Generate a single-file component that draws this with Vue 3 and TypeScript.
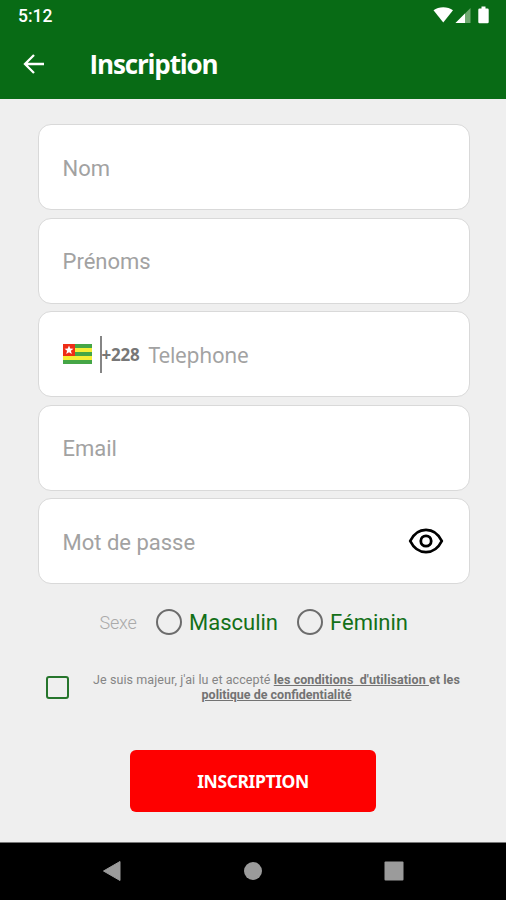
<script setup lang="ts">
import { ref } from 'vue'

interface Field {
  id: string
  label: string
  kind: 'text' | 'phone' | 'password'
}

const fields: Field[] = [
  { id: 'nom', label: 'Nom', kind: 'text' },
  { id: 'prenoms', label: 'Prénoms', kind: 'text' },
  { id: 'telephone', label: 'Telephone', kind: 'phone' },
  { id: 'email', label: 'Email', kind: 'text' },
  { id: 'passe', label: 'Mot de passe', kind: 'password' },
]

const genders = ['Masculin', 'Féminin']
const gender = ref('')
const accepted = ref(false)
</script>

<template>
  <div class="screen">
    <header class="top">
      <div class="status">
        <span class="clock">5:12</span>
        <svg class="status-icons" width="58" height="20" viewBox="0 0 58 20">
          <path d="M.5 5.200C5.700 1.100 14.800 1.100 20 5.200L10.250 17.500Z" fill="#fff" />
          <path d="M37.500 3V18H22.500Z" fill="#6fa971" />
          <path d="M32 8.500V18H22.500Z" fill="#fff" />
          <path d="M48.500 1.500h4V3.500h2q1.200 0 1.200 1.200V17q0 1.200-1.200 1.200h-8q-1.200 0-1.200-1.200V4.700q0-1.200 1.200-1.200h2Z" fill="#fff" />
        </svg>
      </div>
      <div class="appbar">
        <svg class="back" width="24" height="22" viewBox="0 0 24 22">
          <path d="M22 11H3M12 2L3 11L12 20" fill="none" stroke="#fff" stroke-width="2.300" />
        </svg>
        <h1>Inscription</h1>
      </div>
    </header>

    <main>
      <div class="fields">
        <div v-for="f in fields" :key="f.id" class="field" :class="f.kind">
          <template v-if="f.kind === 'phone'">
            <svg class="flag" width="29" height="20" viewBox="0 0 29 20">
              <rect width="29" height="20" fill="#45a646" />
              <rect y="4" width="29" height="4" fill="#f5ee35" />
              <rect y="12" width="29" height="4" fill="#f5ee35" />
              <rect width="12" height="12" fill="#ee2d16" />
              <path d="M6 1.500l1.200 3.100 3.300.1-2.600 2.100.9 3.200L6 8.200 3.200 10l.9-3.200L1.500 4.700l3.300-.1Z" fill="#fff" />
            </svg>
            <span class="divider"></span>
            <span class="code">+228</span>
          </template>
          <span class="label" :class="f.id">{{ f.label }}</span>
          <svg v-if="f.kind === 'password'" class="eye" width="36" height="28" viewBox="0 0 36 28">
            <path d="M2.200 14C9.500-.8 26.500-.8 33.800 14C26.500 28.800 9.500 28.800 2.200 14Z" fill="none" stroke="#000" stroke-width="2.800" stroke-linejoin="round" />
            <circle cx="18" cy="14" r="5.200" fill="none" stroke="#000" stroke-width="2.800" />
          </svg>
        </div>
      </div>

      <div class="gender">
        <span class="caption">Sexe</span>
        <div v-for="g in genders" :key="g" class="option" @click="gender = g">
          <span class="radio" :class="{ on: gender === g }"></span>
          <span class="name">{{ g }}</span>
        </div>
      </div>

      <div class="terms">
        <span class="check" :class="{ on: accepted }" @click="accepted = !accepted"></span>
        <p>
          <span class="line first">Je suis majeur, j'ai lu et accepté <b><u>les conditions&nbsp; d'utilisation&nbsp;</u>et les</b></span>
          <span class="line"><b><u>politique de confidentialité</u></b></span>
        </p>
      </div>

      <button class="submit" type="button">INSCRIPTION</button>
    </main>

    <nav>
      <svg width="20" height="22" viewBox="0 0 20 22"><path d="M18 1.500V20.500L1.500 11Z" fill="#9b9b9b" stroke="#9b9b9b" stroke-linejoin="round" /></svg>
      <svg width="20" height="22" viewBox="0 0 20 22"><circle cx="10" cy="11" r="9" fill="#9b9b9b" /></svg>
      <svg width="20" height="22" viewBox="0 0 20 22"><rect x=".5" y="1.500" width="19" height="19" rx="1" fill="#9b9b9b" /></svg>
    </nav>
  </div>
</template>

<style>
body {
  margin: 0;
}
</style>

<style scoped>
.screen {
  box-sizing: border-box;
  width: 506px;
  height: 900px;
  display: flex;
  flex-direction: column;
  background: #efefef;
  font-family: Roboto, "Liberation Sans", sans-serif;
  white-space: nowrap;
  overflow: hidden;
}
.top {
  height: 98.500px;
  background: #086b15;
  color: #fff;
  flex: none;
}
.status {
  height: 32px;
  padding: 0 15px 0 18px;
  display: flex;
  align-items: center;
  justify-content: space-between;
}
.clock {
  font-size: 17.500px;
  font-weight: 500;
}
.status-icons {
  margin-top: -2px;
}
.appbar {
  height: 64px;
  padding-left: 22px;
  display: flex;
  align-items: center;
}
h1 {
  margin: 0 0 0 43.500px;
  font: 700 26px/34px "Open Sans", "Noto Sans", sans-serif;
  letter-spacing: -1.150px;
}
main {
  flex: 1;
  display: flex;
  flex-direction: column;
  padding: 25.500px 36.500px 0 37.500px;
}
.fields {
  display: grid;
  gap: 7.500px;
}
.field {
  box-sizing: border-box;
  height: 86px;
  padding: 2px 25px 0 24px;
  display: flex;
  align-items: center;
  background: #fff;
  border: 1.500px solid #d9d9d9;
  border-radius: 13px;
  color: #a2a2a2;
  font-size: 22px;
}
.phone {
  padding-top: 1px;
}
.flag {
  margin-top: -1px;
}
.divider {
  width: 2px;
  height: 37px;
  margin-left: 8px;
  background: #858585;
}
.code {
  width: 47px;
  color: #777;
  font: 700 17px/24px "Noto Sans", sans-serif;
  letter-spacing: -0.200px;
}
.telephone {
  font-family: "Noto Sans", "Open Sans", sans-serif;
  font-size: 21px;
  letter-spacing: -0.300px;
}
.eye {
  margin: -3px 0 0 auto;
}
.gender {
  height: 34px;
  margin-top: 21px;
  padding-left: 62px;
  display: flex;
  align-items: center;
}
.caption {
  width: 56.500px;
  color: #aaa;
  font-size: 18px;
  font-weight: 300;
  letter-spacing: -0.200px;
}
.option {
  display: flex;
  align-items: center;
  color: #137018;
  font-size: 22px;
}
.option + .option {
  margin-left: 19px;
}
.radio {
  box-sizing: border-box;
  width: 26px;
  height: 26px;
  margin: -1px 7px 0 0;
  border: 2.500px solid #6c6c6c;
  border-radius: 50%;
}
.radio.on {
  background: radial-gradient(#137018 45%, transparent 50%);
}
.terms {
  display: flex;
  align-items: center;
  height: 34px;
  margin-top: 31.500px;
  padding-left: 8px;
}
.check {
  box-sizing: border-box;
  width: 23px;
  height: 23px;
  border: 2.500px solid #26752c;
  border-radius: 3px;
}
.check.on {
  background: #26752c;
}
.terms p {
  width: 368px;
  margin: -1px 0 0 24px;
  text-align: center;
  color: #858585;
  font-size: 12.500px;
  line-height: 15px;
}
.line {
  display: block;
}
.first {
  letter-spacing: 0.080px;
}
.line b {
  font-weight: 700;
  color: #737373;
}
.submit {
  width: 246px;
  height: 62px;
  margin: 45px 0 0 92.500px;
  padding: 0;
  border: 0;
  border-radius: 6px;
  background: #fe0000;
  color: #fff;
  font: 700 17.500px/24px "Noto Sans", sans-serif;
  letter-spacing: -0.400px;
}
nav {
  box-sizing: border-box;
  height: 58.500px;
  flex: none;
  padding: 0 102px 0 102px;
  display: flex;
  align-items: center;
  justify-content: space-between;
  background: #000;
  border-top: 1px solid #777;
}
</style>
